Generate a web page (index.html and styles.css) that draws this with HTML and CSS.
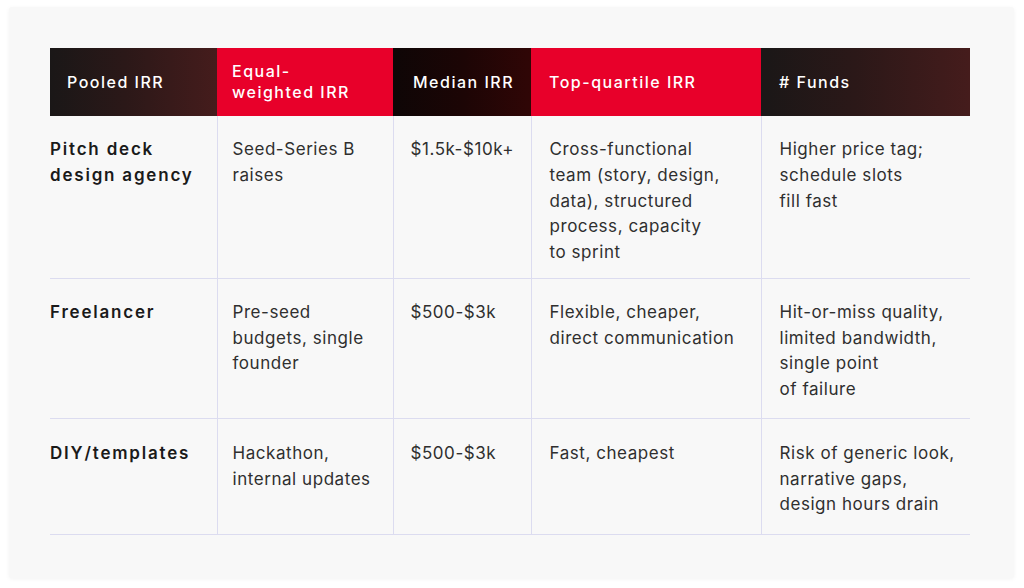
FILE: index.html
```html
<!DOCTYPE html>
<html lang="en">
<head>
<meta charset="utf-8">
<title>Pitch deck options</title>
<link rel="stylesheet" href="styles.css">
</head>
<body>
<div class="card">
  <table class="grid">
    <colgroup>
      <col class="c1"><col class="c2"><col class="c3"><col class="c4"><col class="c5">
    </colgroup>
    <thead>
      <tr>
        <th class="h-dark1 first">Pooled IRR</th>
        <th class="h-red">Equal-<br>weighted IRR</th>
        <th class="h-dark2">Median IRR</th>
        <th class="h-red">Top-quartile IRR</th>
        <th class="h-dark1">#&nbsp;Funds</th>
      </tr>
    </thead>
    <tbody>
      <tr class="r1">
        <td class="first">Pitch deck<br>design agency</td>
        <td>Seed-Series B<br>raises</td>
        <td>$1.5k-$10k+</td>
        <td>Cross-functional<br>team (story, design,<br>data), structured<br>process, capacity<br>to sprint</td>
        <td>Higher price tag;<br>schedule slots<br>fill fast</td>
      </tr>
      <tr class="r2">
        <td class="first">Freelancer</td>
        <td>Pre-seed<br>budgets, single<br>founder</td>
        <td>$500-$3k</td>
        <td>Flexible, cheaper,<br>direct communication</td>
        <td>Hit-or-miss quality,<br>limited bandwidth,<br>single point<br>of failure</td>
      </tr>
      <tr class="r3">
        <td class="first">DIY/templates</td>
        <td>Hackathon,<br>internal updates</td>
        <td>$500-$3k</td>
        <td>Fast, cheapest</td>
        <td>Risk of generic look,<br>narrative gaps,<br>design hours drain</td>
      </tr>
    </tbody>
  </table>
</div>
</body>
</html>
```

FILE: styles.css
```css
* { box-sizing: border-box; }
html, body { margin: 0; padding: 0; background: #ffffff; }
body {
  width: 1024px;
  height: 588px;
  padding: 7px 10px 10px 9px;
  font-family: Inter, "Noto Sans", sans-serif;
}
.card {
  width: 1005px;
  height: 571px;
  background: #f8f8f8;
  border-radius: 3px;
  box-shadow: 0 1px 4px rgba(0, 0, 0, 0.05);
  padding: 41px 0 0 41px;
}
.grid {
  border-collapse: collapse;
  table-layout: fixed;
  width: 920px;
}
.c1 { width: 167px; }
.c2 { width: 176px; }
.c3 { width: 138px; }
.c4 { width: 230px; }
.c5 { width: 209px; }
th {
  height: 68px;
  padding: 0 6px 0 16px;
  text-align: left;
  vertical-align: middle;
  color: #ffffff;
  font-size: 16px;
  font-weight: 500;
  letter-spacing: 1.5px;
  line-height: 21px;
}
th.first { padding-left: 17px; }
.h-red { background: #e8002a; }
.h-dark1 { background: linear-gradient(90deg, #1a1717 0%, #2b1818 45%, #451c1c 100%); }
.h-dark2 { background: linear-gradient(90deg, #0e0606 0%, #1c0505 50%, #300606 100%); }
.grid thead th:nth-child(2) { padding-left: 15px; }
.grid thead th:nth-child(3) { padding-left: 20px; }
.grid thead th:nth-child(4),
.grid thead th:nth-child(5) { padding-left: 18px; }
td {
  vertical-align: top;
  padding: 21px 4px 12px 17px;
  font-size: 17px;
  line-height: 25.75px;
  color: #2f2f2f;
  font-weight: 400;
  letter-spacing: 0.55px;
  border-left: 1.5px solid #dcdcf0;
  border-bottom: 1.5px solid #dcdcf0;
}
.r2 td { padding-top: 21px; padding-bottom: 15px; }
.r3 td { padding-top: 22px; padding-bottom: 16px; }
td.first {
  padding-left: 0;
  border-left: none;
  font-weight: 600;
  color: #1a1a1a;
  letter-spacing: 1.8px;
}
td:nth-child(2) { padding-left: 15px; }
td:nth-child(4),
td:nth-child(5) { padding-left: 18px; }
```
